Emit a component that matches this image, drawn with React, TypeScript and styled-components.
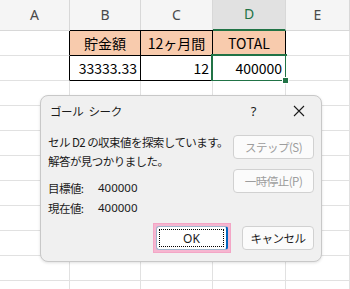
import styled, { createGlobalStyle } from "styled-components";

const GlobalStyle = createGlobalStyle`
  html, body {
    margin: 0;
    padding: 0;
    background: #ffffff;
    font-family: "Noto Sans CJK JP", "Noto Sans", sans-serif;
  }
`;

const Page = styled.div`
  position: relative;
  width: 350px;
  height: 289px;
  overflow: hidden;
  background: #ffffff;
`;

const Sheet = styled.div`
  display: grid;
  grid-template-columns: 70px 71px 72px 73px 64px;
  grid-template-rows: 31px repeat(11, 25px);
`;

const ColHeader = styled.div<{ $active?: boolean }>`
  display: flex;
  align-items: center;
  justify-content: center;
  background: ${(p) => (p.$active ? "#e1e1e1" : "#f5f5f5")};
  border-right: 1px solid #d8d8d8;
  border-bottom: ${(p) => (p.$active ? "2px solid #217346" : "1px solid #d8d8d8")};
  color: ${(p) => (p.$active ? "#217346" : "#4a4a4a")};
  font-family: "Noto Sans", sans-serif;
  font-size: 14px;
  padding-bottom: 2px;
`;

const Cell = styled.div<{
  $fill?: string;
  $align?: "left" | "center" | "right";
  $boxed?: boolean;
  $edgeRight?: boolean;
  $edgeTop?: boolean;
  $selected?: boolean;
}>`
  position: relative;
  display: flex;
  align-items: center;
  justify-content: ${(p) =>
    p.$align === "center" ? "center" : p.$align === "right" ? "flex-end" : "flex-start"};
  padding: 0 3px 1px;
  background: ${(p) => p.$fill ?? "#ffffff"};
  border-right: 1px solid ${(p) => (p.$boxed || p.$edgeRight ? "#000000" : "#e1e1e1")};
  border-bottom: 1px solid ${(p) => (p.$boxed ? "#000000" : "#e1e1e1")};
  box-shadow: ${(p) => (p.$edgeTop ? "0 -1px 0 #000000" : "none")};
  color: #000000;
  font-size: 14px;
  white-space: nowrap;

  ${(p) =>
    p.$selected &&
    `
    &::after {
      content: "";
      position: absolute;
      left: -2px;
      top: -2px;
      right: -2px;
      bottom: -2px;
      border: 2px solid #217346;
      pointer-events: none;
    }
    &::before {
      content: "";
      position: absolute;
      right: -4px;
      bottom: -4px;
      width: 5px;
      height: 5px;
      background: #217346;
      border: 1px solid #ffffff;
      z-index: 2;
    }
  `}
`;

const Dialog = styled.div`
  position: absolute;
  left: 40px;
  top: 95px;
  width: 280px;
  height: 165px;
  display: flex;
  flex-direction: column;
  background: #f0f0f0;
  border: 1px solid #c8c8c8;
  border-radius: 8px;
  box-shadow: 0 1px 3px rgba(0, 0, 0, 0.12);
  color: #1b1b1b;
  font-size: 11.5px;
`;

const TitleBar = styled.div`
  display: flex;
  align-items: center;
  height: 29px;
  padding-left: 9px;
`;

const Title = styled.div`
  flex: 1;
  letter-spacing: -0.4px;
  word-spacing: 3px;
`;

const TitleButton = styled.div`
  width: 45px;
  height: 29px;
  display: flex;
  align-items: center;
  justify-content: center;
  font-family: "Noto Sans", sans-serif;
  font-size: 13px;
`;

const Body = styled.div`
  display: flex;
  padding: 8px 7px 0 7px;
`;

const Message = styled.div`
  flex: 1;
  display: flex;
  flex-direction: column;
  letter-spacing: -0.55px;
`;

const Line = styled.div`
  line-height: 19px;
  white-space: nowrap;
`;

const Values = styled.div`
  margin-top: 7px;
  display: flex;
  flex-direction: column;
`;

const ValueRow = styled.div`
  display: flex;
  line-height: 20px;
`;

const ValueLabel = styled.span`
  width: 50px;
`;

const ValueNum = styled.span`
  font-family: "Noto Sans", sans-serif;
  letter-spacing: 0;
`;

const SideButtons = styled.div`
  display: flex;
  flex-direction: column;
  gap: 10px;
  margin-top: 2px;
`;

const Button = styled.div<{ $disabled?: boolean }>`
  width: 79px;
  height: 22px;
  display: flex;
  align-items: center;
  justify-content: center;
  background: #fbfbfb;
  border: 1px solid #d1d1d1;
  border-radius: 4px;
  color: ${(p) => (p.$disabled ? "#9d9d9d" : "#1b1b1b")};
  letter-spacing: -0.5px;
`;

const Footer = styled.div`
  margin-top: auto;
  display: flex;
  justify-content: flex-end;
  align-items: center;
  gap: 11px;
  padding: 0 7px 8px 0;
`;

const FocusRing = styled.div`
  padding: 2px;
  border: 1px solid #f3a6c6;
  background: #f6b6d0;
`;

const DefaultButton = styled.div`
  position: relative;
  width: 69px;
  height: 22px;
  display: flex;
  align-items: center;
  justify-content: center;
  background: #ffffff;
  border: 1px solid #9fb5cc;
  border-right: 2px solid #0067c0;
  border-radius: 3px;
  font-family: "Noto Sans", sans-serif;
  font-size: 12px;

  &::after {
    content: "";
    position: absolute;
    inset: 2px;
    border: 1px dotted #000000;
  }
`;

const CancelButton = styled(Button)`
  width: 70px;
  height: 22px;
`;

const cols = ["A", "B", "C", "D", "E"];

export default function App() {
  return (
    <Page>
      <GlobalStyle />
      <Sheet>
        {cols.map((c) => (
          <ColHeader key={c} $active={c === "D"}>
            {c}
          </ColHeader>
        ))}

        <Cell $edgeRight />
        <Cell $fill="#f8cbad" $align="center" $boxed $edgeTop>
          貯金額
        </Cell>
        <Cell $fill="#f8cbad" $align="center" $boxed $edgeTop>
          12ヶ月間
        </Cell>
        <Cell $fill="#f8cbad" $align="center" $boxed>
          TOTAL
        </Cell>
        <Cell />

        <Cell $edgeRight />
        <Cell $align="right" $boxed>
          33333.33
        </Cell>
        <Cell $align="right" $boxed>
          12
        </Cell>
        <Cell $align="right" $boxed $selected>
          400000
        </Cell>
        <Cell />

        {Array.from({ length: 45 }).map((_, i) => (
          <Cell key={i} />
        ))}
      </Sheet>

      <Dialog>
        <TitleBar>
          <Title>ゴール シーク</Title>
          <TitleButton>?</TitleButton>
          <TitleButton>
            <svg width="12" height="12" viewBox="0 0 12 12">
              <path d="M1 1 L11 11 M11 1 L1 11" stroke="#1b1b1b" strokeWidth="1.1" fill="none" />
            </svg>
          </TitleButton>
        </TitleBar>
        <Body>
          <Message>
            <Line>セル D2 の収束値を探索しています。</Line>
            <Line>解答が見つかりました。</Line>
            <Values>
              <ValueRow>
                <ValueLabel>目標値:</ValueLabel>
                <ValueNum>400000</ValueNum>
              </ValueRow>
              <ValueRow>
                <ValueLabel>現在値:</ValueLabel>
                <ValueNum>400000</ValueNum>
              </ValueRow>
            </Values>
          </Message>
          <SideButtons>
            <Button $disabled>ステップ(S)</Button>
            <Button $disabled>一時停止(P)</Button>
          </SideButtons>
        </Body>
        <Footer>
          <FocusRing>
            <DefaultButton>OK</DefaultButton>
          </FocusRing>
          <CancelButton>キャンセル</CancelButton>
        </Footer>
      </Dialog>
    </Page>
  );
}
